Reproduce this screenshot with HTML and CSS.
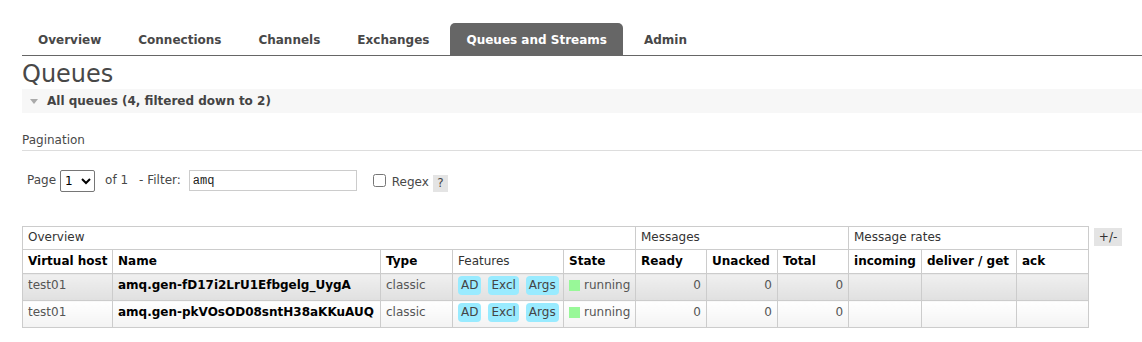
FILE: index.html
```html
<!DOCTYPE html>
<html lang="en">
<head>
    <meta charset="UTF-8">
    <title>RabbitMQ Management: Queues</title>
    <link rel="stylesheet" href="styles.css">
</head>
<body>

    <div id="menu">
        <ul>
            <li><a href="#">Overview</a></li>
            <li><a href="#">Connections</a></li>
            <li><a href="#">Channels</a></li>
            <li><a href="#">Exchanges</a></li>
            <li><a href="#" class="selected">Queues and Streams</a></li>
            <li><a href="#">Admin</a></li>
        </ul>
    </div>

    <h1>Queues</h1>

    <div class="section">
        <h2><span class="arrow"></span>All queues (4, filtered down to 2)</h2>
        <div class="hider">
            <h3>Pagination</h3>
            <div class="filter">
                <label>Page</label>
                <select class="page-select">
                    <option>1</option>
                </select>
                <span class="of">of 1</span>
                <label class="filter-label">- Filter:</label>
                <input type="text" class="filter-input" value="amq">
                <input type="checkbox" class="regex-box">
                <label class="regex-label">Regex</label>
                <span class="help">?</span>
            </div>

            <div class="table-wrap">
                <table class="list">
                    <colgroup>
                        <col style="width: 90px">
                        <col style="width: 268px">
                        <col style="width: 72px">
                        <col style="width: 111px">
                        <col style="width: 72px">
                        <col style="width: 71px">
                        <col style="width: 71px">
                        <col style="width: 71px">
                        <col style="width: 73px">
                        <col style="width: 95px">
                        <col style="width: 72px">
                    </colgroup>
                    <thead>
                        <tr class="group">
                            <th colspan="5">Overview</th>
                            <th colspan="3">Messages</th>
                            <th colspan="3">Message rates</th>
                        </tr>
                        <tr>
                            <th>Virtual host</th>
                            <th>Name</th>
                            <th>Type</th>
                            <th class="plain">Features</th>
                            <th>State</th>
                            <th>Ready</th>
                            <th>Unacked</th>
                            <th>Total</th>
                            <th>incoming</th>
                            <th>deliver / get</th>
                            <th>ack</th>
                        </tr>
                    </thead>
                    <tbody>
                        <tr class="alt1">
                            <td>test01</td>
                            <td class="qname">amq.gen-fD17i2LrU1Efbgelg_UygA</td>
                            <td>classic</td>
                            <td class="features"><div class="tags"><abbr>AD</abbr><abbr>Excl</abbr><abbr>Args</abbr></div></td>
                            <td><span class="state-ok"></span>running</td>
                            <td class="r">0</td>
                            <td class="r">0</td>
                            <td class="r">0</td>
                            <td></td>
                            <td></td>
                            <td></td>
                        </tr>
                        <tr class="alt2">
                            <td>test01</td>
                            <td class="qname">amq.gen-pkVOsOD08sntH38aKKuAUQ</td>
                            <td>classic</td>
                            <td class="features"><div class="tags"><abbr>AD</abbr><abbr>Excl</abbr><abbr>Args</abbr></div></td>
                            <td><span class="state-ok"></span>running</td>
                            <td class="r">0</td>
                            <td class="r">0</td>
                            <td class="r">0</td>
                            <td></td>
                            <td></td>
                            <td></td>
                        </tr>
                    </tbody>
                </table>
                <span class="columns-toggle">+/-</span>
            </div>
        </div>
    </div>

</body>
</html>
```

FILE: styles.css
```css
body {
    font-family: "DejaVu Sans", Verdana, sans-serif;
    font-size: 12px;
    line-height: 15px;
    color: #484848;
    margin: 0;
    padding: 0 0 0 22px;
}
#menu ul {
    list-style: none;
    margin: 23px 0 0 0;
    padding: 0;
    display: flex;
    border-bottom: 1px solid #666;
}
#menu li a {
    display: block;
    padding: 10px 16px 7px;
    margin-right: 5px;
    font-weight: bold;
    color: #484848;
    text-decoration: none;
    border-radius: 5px 5px 0 0;
}
#menu li a.selected {
    background-color: #666;
    color: #fff;
}
h1 {
    font-size: 24px;
    font-weight: normal;
    line-height: 29px;
    color: #484848;
    margin: 4px 0 0;
}
.section h2 {
    display: flex;
    align-items: center;
    margin: 0;
    height: 24px;
    background-color: #f7f7f7;
    font-size: 12px;
    font-weight: bold;
    color: #444;
}
.arrow {
    width: 0;
    height: 0;
    margin: 0 9px 0 8px;
    border-left: 4px solid transparent;
    border-right: 4px solid transparent;
    border-top: 5px solid #aaa;
}
.hider h3 {
    font-size: 12px;
    font-weight: normal;
    margin: 20px 0 0;
    padding-bottom: 2px;
    border-bottom: 1px solid #ddd;
}
.filter {
    display: flex;
    align-items: center;
    margin-top: 18px;
    padding-left: 5px;
    height: 23px;
}
.page-select {
    width: 35px;
    height: 22px;
    margin-left: 4px;
    font-family: "DejaVu Sans", sans-serif;
    font-size: 12px;
    color: #000;
    border: 1px solid #767676;
    border-radius: 2px;
    background: #fff;
}
.of {
    margin-left: 10px;
}
.filter-label {
    margin-left: 11px;
}
.filter-input {
    width: 168px;
    height: 21px;
    margin-left: 8px;
    padding: 0 3px;
    box-sizing: border-box;
    border: 1px solid #ccc;
    font-family: "Liberation Mono", monospace;
    font-size: 12px;
    color: #222;
}
.regex-box {
    width: 13px;
    height: 13px;
    margin: 0 0 0 16px;
}
.regex-label {
    margin-left: 6px;
    margin-top: 4px;
}
.help {
    display: inline-block;
    margin: 5px 0 0 4px;
    width: 15px;
    height: 17px;
    line-height: 17px;
    text-align: center;
    background-color: #e4e4e4;
    color: #444;
}
.table-wrap {
    display: flex;
    align-items: flex-start;
    margin-top: 34px;
}
table.list {
    border-collapse: collapse;
    table-layout: fixed;
    width: 1067px;
}
table.list th,
table.list td {
    border: 1px solid #ccc;
    text-align: left;
    vertical-align: top;
    white-space: nowrap;
    overflow: hidden;
}
table.list th {
    padding: 4px 5px;
    color: #000;
    font-weight: bold;
}
table.list tr.group th,
table.list th.plain {
    font-weight: normal;
    color: #333;
}
table.list tr.group th {
    padding: 3px 5px 4px;
}
table.list td {
    padding: 4px 5px 7px;
    color: #555;
}
table.list td.qname {
    font-weight: bold;
    color: #000;
}
table.list td.r {
    text-align: right;
}
table.list td.features {
    padding: 2px 5px 5px;
}
tr.alt1 td {
    background: linear-gradient(#f0f0f0, #e0e0e0);
}
tr.alt2 td {
    background: linear-gradient(#ffffff, #f3f3f3);
}
.tags {
    display: flex;
    gap: 7px;
}
.tags abbr {
    display: block;
    height: 19px;
    line-height: 19px;
    padding: 0 3px;
    background-color: #99ebff;
    border-radius: 4px;
    color: #444;
    text-decoration: none;
}
.state-ok {
    display: inline-block;
    width: 11px;
    height: 11px;
    margin: 2px 4px 0 0;
    vertical-align: top;
    background-color: #98f898;
}
.columns-toggle {
    margin: 2px 0 0 5px;
    width: 28px;
    height: 18px;
    line-height: 18px;
    text-align: center;
    background-color: #e4e4e4;
    color: #333;
}
```
